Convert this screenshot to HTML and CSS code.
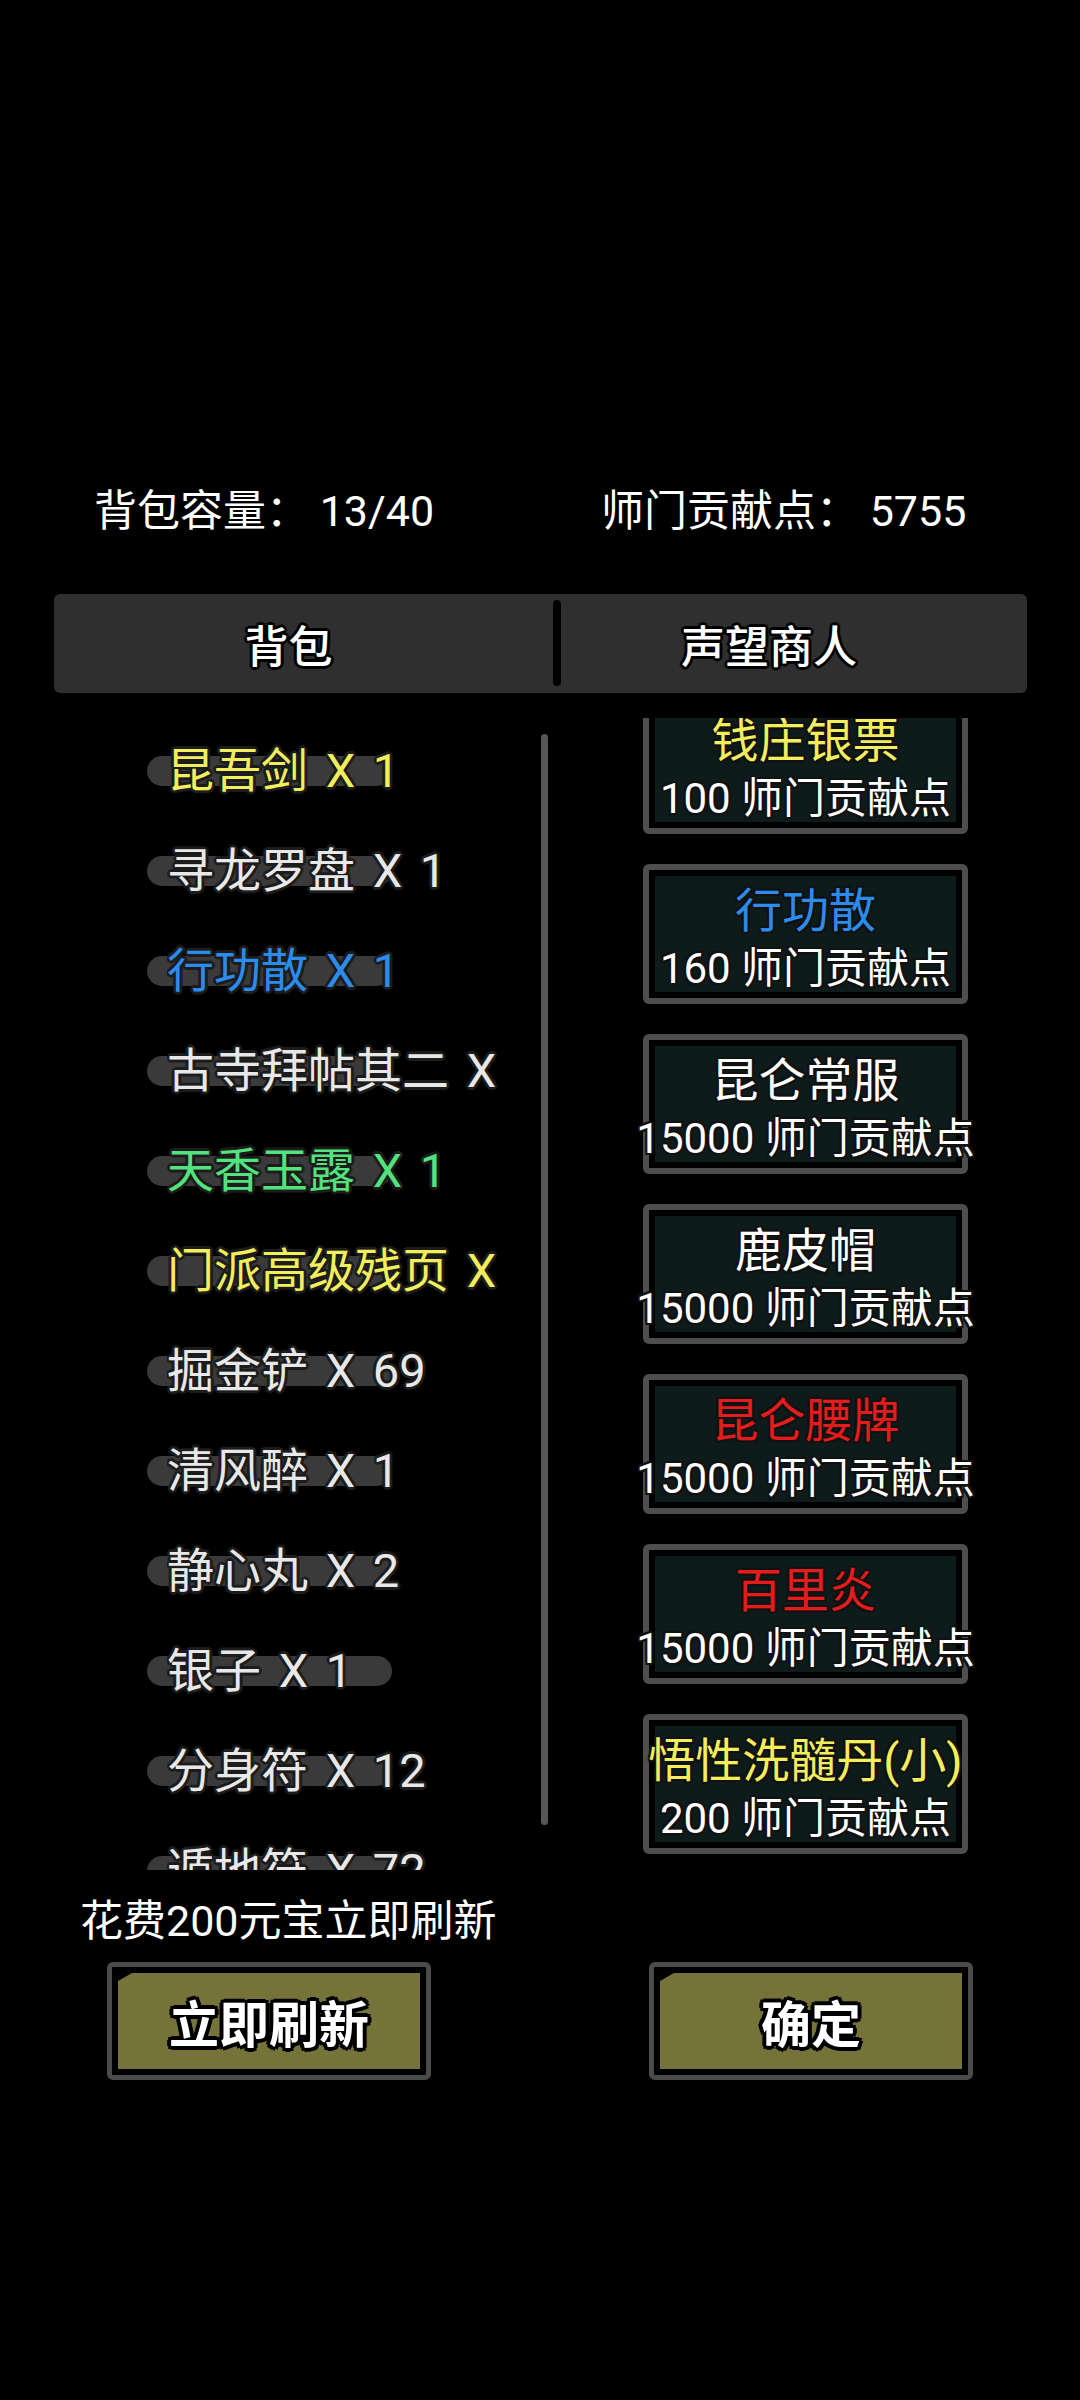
FILE: index.html
```html
<!DOCTYPE html>
<html lang="zh">
<head>
    <meta charset="UTF-8">
    <meta name="viewport" content="width=device-width, initial-scale=1.0">
    <title>声望商人</title>
    <link rel="stylesheet" href="styles.css">
</head>
<body>
    <!-- 顶部统计 -->
    <div class="stats">
        <span class="stat-bag">背包容量： 13/40</span>
        <span class="stat-points">师门贡献点： 5755</span>
    </div>

    <!-- 标签栏 -->
    <div class="tabs">
        <div class="tab tab-bag">背包</div>
        <div class="tab-divider"></div>
        <div class="tab tab-shop">声望商人</div>
    </div>

    <div class="main">
        <!-- 背包列表 -->
        <div class="bag">
            <ul class="bag-list">
                <li class="bag-item gold"><span>昆吾剑 X 1</span></li>
                <li class="bag-item"><span>寻龙罗盘 X 1</span></li>
                <li class="bag-item blue"><span>行功散 X 1</span></li>
                <li class="bag-item"><span>古寺拜帖其二 X 1</span></li>
                <li class="bag-item green"><span>天香玉露 X 1</span></li>
                <li class="bag-item gold"><span>门派高级残页 X 1</span></li>
                <li class="bag-item"><span>掘金铲 X 69</span></li>
                <li class="bag-item"><span>清风醉 X 1</span></li>
                <li class="bag-item"><span>静心丸 X 2</span></li>
                <li class="bag-item"><span>银子 X 1</span></li>
                <li class="bag-item"><span>分身符 X 12</span></li>
                <li class="bag-item"><span>遁地符 X 72</span></li>
            </ul>
            <div class="scrollbar"></div>
        </div>

        <!-- 商人货架 -->
        <div class="shop">
            <div class="shop-list">
                <div class="card"><div class="card-inner">
                    <div class="card-name gold">钱庄银票</div>
                    <div class="card-price">100 师门贡献点</div>
                </div></div>
                <div class="card"><div class="card-inner">
                    <div class="card-name blue">行功散</div>
                    <div class="card-price">160 师门贡献点</div>
                </div></div>
                <div class="card"><div class="card-inner">
                    <div class="card-name">昆仑常服</div>
                    <div class="card-price">15000 师门贡献点</div>
                </div></div>
                <div class="card"><div class="card-inner">
                    <div class="card-name">鹿皮帽</div>
                    <div class="card-price">15000 师门贡献点</div>
                </div></div>
                <div class="card"><div class="card-inner">
                    <div class="card-name red">昆仑腰牌</div>
                    <div class="card-price">15000 师门贡献点</div>
                </div></div>
                <div class="card"><div class="card-inner">
                    <div class="card-name red">百里炎</div>
                    <div class="card-price">15000 师门贡献点</div>
                </div></div>
                <div class="card"><div class="card-inner">
                    <div class="card-name gold">悟性洗髓丹(小)</div>
                    <div class="card-price">200 师门贡献点</div>
                </div></div>
            </div>
        </div>
    </div>

    <div class="hint">花费200元宝立即刷新</div>

    <div class="actions">
        <div class="btn btn-refresh"><div class="btn-face">立即刷新</div></div>
        <div class="btn btn-ok"><div class="btn-face">确定</div></div>
    </div>
</body>
</html>
```

FILE: styles.css
```css
/* 基本页面 */
html, body {
    margin: 0;
    padding: 0;
    background: #000;
}
body {
    width: 1080px;
    min-height: 2400px;
    color: #fff;
    font-family: Roboto, "Noto Sans CJK SC", sans-serif;
    overflow: hidden;
}

/* 顶部统计 */
.stats {
    display: flex;
    padding: 483px 0 0 94px;
    height: 56px;
    line-height: 56px;
    font-size: 43px;
    white-space: pre;
}
.stat-bag {
    width: 507px;
}

/* 标签栏 */
.tabs {
    display: flex;
    margin: 55px 53px 0 54px;
    height: 99px;
    background: #2f2f2f;
    border-radius: 6px;
}
.tab {
    display: flex;
    align-items: center;
    justify-content: center;
    font-size: 44px;
    font-weight: 500;
    text-shadow: 3px 0 #000, -3px 0 #000, 0 3px #000, 0 -3px #000,
        2px 2px #000, -2px 2px #000, 2px -2px #000, -2px -2px #000;
}
.tab-bag {
    width: 499px;
    box-sizing: border-box;
    padding-right: 30px;
}
.tab-shop {
    flex: 1;
    padding-right: 50px;
}
.tab-divider {
    width: 8px;
    margin: 6px 0 7px;
    background: #000;
    border-radius: 4px;
}

/* 主体两栏 */
.main {
    display: flex;
    margin-top: 25px;
    height: 1152px;
}

/* 背包 */
.bag {
    display: flex;
    width: 555px;
}
.bag-list {
    flex: 1;
    list-style: none;
    margin: 0;
    padding: 3px 0 0 147px;
    overflow: hidden;
}
.bag-item {
    position: relative;
    height: 100px;
    line-height: 100px;
    padding-left: 20px;
    font-size: 47px;
    color: #e8e8e8;
    word-spacing: 6px;
    text-shadow: 3px 0 #1c1c1c, -3px 0 #1c1c1c, 0 3px #1c1c1c, 0 -3px #1c1c1c,
        2px 2px #1c1c1c, -2px 2px #1c1c1c, 2px -2px #1c1c1c, -2px -2px #1c1c1c;
}
.bag-item::before {
    content: "";
    position: absolute;
    left: 0;
    top: 35px;
    width: 245px;
    height: 30px;
    border-radius: 15px;
    background: #3a3a3a;
}
.bag-item span {
    position: relative;
    display: block;
    width: 341px;
    white-space: nowrap;
    overflow: hidden;
}
.scrollbar {
    width: 7px;
    margin: 16px 7px 45px 0;
    background: #575757;
    border-radius: 4px;
}

/* 颜色 */
.gold { color: #f2ee5c; }
.blue { color: #2b8cec; }
.green { color: #52e27e; }
.red { color: #e51c1c; }

/* 商人 */
.shop {
    flex: 1;
    padding-left: 88px;
    overflow: hidden;
}
.shop-list {
    display: flex;
    flex-direction: column;
    gap: 30px;
    margin-top: -24px;
}
.card {
    width: 325px;
    height: 140px;
    box-sizing: border-box;
    border: 6px solid #4e4e4e;
    border-radius: 6px;
    padding: 6px;
    background: #000;
}
.card-inner {
    height: 100%;
    background: #0e1b1b;
    text-shadow: 2px 0 #111, -2px 0 #111, 0 2px #111, 0 -2px #111,
        2px 2px #111, -2px 2px #111, 2px -2px #111, -2px -2px #111;
}
.card-name {
    display: flex;
    justify-content: center;
    height: 70px;
    line-height: 70px;
    font-size: 47px;
    white-space: nowrap;
}
.card-price {
    display: flex;
    justify-content: center;
    height: 46px;
    line-height: 46px;
    font-size: 42px;
    white-space: nowrap;
}

/* 底部 */
.hint {
    margin: 26px 0 0 80px;
    height: 50px;
    line-height: 50px;
    font-size: 43px;
}
.actions {
    display: flex;
    gap: 218px;
    margin: 16px 0 0 107px;
}
.btn {
    width: 324px;
    height: 118px;
    box-sizing: border-box;
    border: 5px solid #4b4b4b;
    border-radius: 6px;
    padding: 6px;
    background: #000;
}
.btn-face {
    display: flex;
    align-items: center;
    justify-content: center;
    height: 100%;
    background: #76733a;
    clip-path: polygon(14px 0, 100% 0, 100% 100%, 0 100%, 0 8px);
    font-size: 50px;
    font-weight: 700;
    text-shadow: 4px 0 #000, -4px 0 #000, 0 4px #000, 0 -4px #000,
        3px 3px #000, -3px 3px #000, 3px -3px #000, -3px -3px #000;
}
```
